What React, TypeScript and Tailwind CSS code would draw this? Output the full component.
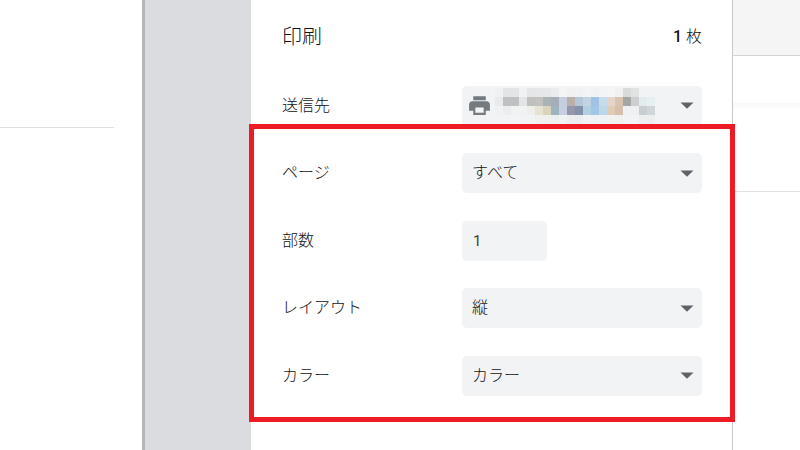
const Arrow = () => (
  <svg width="14" height="7" viewBox="0 0 14 7" className="shrink-0">
    <path d="M0.5 0.5h13L7 6.8z" fill="#5f6368" />
  </svg>
);

const Select = ({ children }: { children: React.ReactNode }) => (
  <div className="flex h-10 w-60 items-center justify-between rounded-[5px] bg-[#f1f3f4] pl-[10px] pr-[8px] text-base text-[#111214]">
    <div className="flex items-center">{children}</div>
    <Arrow />
  </div>
);

const Row = ({ label, children }: { label: string; children: React.ReactNode }) => (
  <div className="flex h-10 items-center justify-between">
    <span className="text-base text-[#111214]">{label}</span>
    {children}
  </div>
);

const blur = [
  "#f0f1f2 #e3e4e6 #e3e4e6 #f0f1f2 #e5e6e8 #e6e7e9 #e6e7e9 #ebecee #f3f4f4 #f1f1ef #f0f2f4 #f2f4f5 #f0f3f5 #f2f4f6 #f3f5f6 #f0f1f0 #d9dbdb #e1e2e3 #f1f3f4 #f1f3f4",
  "#e9eaec #bfc0c2 #bfc0c2 #e3e4e6 #c0c0bd #c2c3bf #a9b3b4 #a5aeb8 #c6cddd #b9b0ab #b6c8d8 #c0d4e4 #a0c2e3 #c6dde9 #e4d5ca #d9c3b1 #a5a7a3 #cdcfd0 #e3eced #e6eff1",
  "#f0f1f2 #eceded #f1f2f2 #f1f2f1 #eeeeea #e8e2d2 #d9d5bd #9eb2bf #c6cfe1 #9696ad #8391ab #b1cfe3 #a2c7e6 #bdd8e8 #deccb5 #d7bfab #eff1f2 #eef0f1 #c6d0d2 #cfd7d9",
  "#f1f3f4 #f1f3f4 #f1f3f4 #f1f3f4 #f1f3f4 #f0f1ee #f0f1ef #edf0f1 #f0f3f4 #ecedef #ebedef #f0f3f4 #eff2f4 #eff2f4 #f1f2f2 #eff1f1 #f1f3f4 #f1f3f4 #eceef0 #eceef0",
].map((r) => r.split(" "));

export default function App() {
  return (
    <div className="relative flex h-[450px] w-[800px] overflow-hidden bg-white font-['Roboto','Noto_Sans_CJK_JP',sans-serif] font-light">
      <div className="w-[142px] shrink-0 pt-[127px]">
        <div className="h-px w-[114px] bg-[#dfdfdf]" />
      </div>
      <div className="w-[109px] shrink-0 border-l-[3px] border-[#b5b6b9] bg-[#dadce0]" />
      <div className="w-[481px] shrink-0 pl-[31px] pr-[30px]">
        <div className="flex h-[72px] items-center justify-between pt-[1px]">
          <span className="text-[20px] text-[#111214]">印刷</span>
          <span className="text-base text-[#111214]">
            <b className="font-medium">1</b> 枚
          </span>
        </div>
        <div className="mt-[13.9px] flex flex-col gap-[27.5px]">
          <Row label="送信先">
            <div className="flex h-10 w-60 items-center justify-between rounded-[5px] bg-[#f1f3f4] pl-[5px] pr-[8px]">
              <div className="flex items-center">
                <svg width="25" height="25" viewBox="0 0 24 24" fill="#757a7f" className="shrink-0">
                  <path d="M19 8H5c-1.66 0-3 1.34-3 3v6h4v4h12v-4h4v-6c0-1.66-1.34-3-3-3zm-3 11H8v-5h8v5zM18 3H6v4h12V3z" />
                </svg>
                <div className="ml-[3px] flex flex-col">
                  {blur.map((r, i) => (
                    <div key={i} className="flex">
                      {r.map((c, j) => (
                        <div key={j} className="h-[9px] w-2" style={{ backgroundColor: c }} />
                      ))}
                    </div>
                  ))}
                </div>
              </div>
              <Arrow />
            </div>
          </Row>
          <Row label="ページ">
            <Select>すべて</Select>
          </Row>
          <Row label="部数">
            <div className="mr-[155px] flex h-10 w-[85px] items-center rounded-[5px] bg-[#f1f3f4] pl-[11px] text-[15px] font-normal text-[#3c4043]">
              1
            </div>
          </Row>
          <Row label="レイアウト">
            <Select>縦</Select>
          </Row>
          <Row label="カラー">
            <Select>カラー</Select>
          </Row>
        </div>
      </div>
      <div className="flex-1 border-l border-[#c8c8c8]">
        <div className="h-[56px] border-b border-[#d4d4d4] bg-[#f5f5f5]" />
        <div className="h-[47px] bg-white" />
        <div className="h-[89px] border-b border-[#e0e0e0] bg-gradient-to-b from-[#f8f8f8] to-white to-[8%]" />
      </div>
      <div className="pointer-events-none absolute left-[249px] top-[124px] h-[298px] w-[486px] border-[5px] border-[#ed1c24]" />
    </div>
  );
}
